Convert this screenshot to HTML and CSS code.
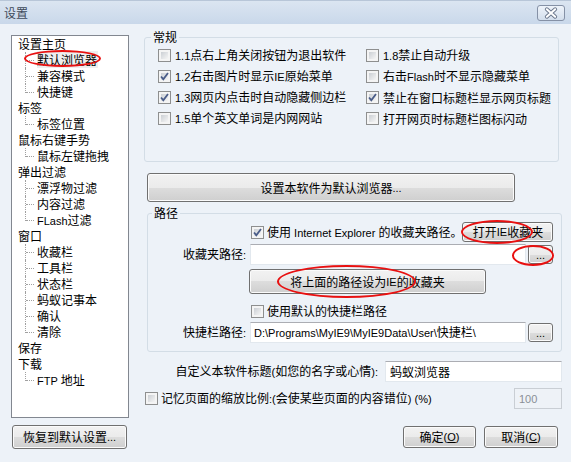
FILE: index.html
```html
<!DOCTYPE html>
<html lang="zh-CN">
<head>
<meta charset="utf-8">
<title>设置</title>
<link rel="stylesheet" href="styles.css">
</head>
<body>
<div class="window">
  <div class="titlebar">
    <span class="title">设置</span>
    <span class="close">
      <svg width="28" height="16" viewBox="0 0 28 16">
        <path d="M9.5 4 L18.5 12 M18.5 4 L9.5 12" stroke="#6b778c" stroke-width="4.2" stroke-linecap="round"/>
        <path d="M9.5 4 L18.5 12 M18.5 4 L9.5 12" stroke="#ffffff" stroke-width="2.2" stroke-linecap="round"/>
      </svg>
    </span>
  </div>
  <div class="main">
    <div class="left">
      <div class="tree">
        <div class="node">设置主页</div>
        <div class="kids">
          <div class="kid"><span class="sel">默认浏览器</span></div>
          <div class="kid">兼容模式</div>
          <div class="kid">快捷键</div>
        </div>
        <div class="node">标签</div>
        <div class="kids"><div class="kid">标签位置</div></div>
        <div class="node">鼠标右键手势</div>
        <div class="kids"><div class="kid">鼠标左键拖拽</div></div>
        <div class="node">弹出过滤</div>
        <div class="kids">
          <div class="kid">漂浮物过滤</div>
          <div class="kid">内容过滤</div>
          <div class="kid"><span class="en">FLash</span>过滤</div>
        </div>
        <div class="node">窗口</div>
        <div class="kids">
          <div class="kid">收藏栏</div>
          <div class="kid">工具栏</div>
          <div class="kid">状态栏</div>
          <div class="kid">蚂蚁记事本</div>
          <div class="kid">确认</div>
          <div class="kid">清除</div>
        </div>
        <div class="node">保存</div>
        <div class="node">下载</div>
        <div class="kids"><div class="kid"><span class="en">FTP </span>地址</div></div>
      </div>
      <button class="btn restore">恢复到默认设置<span class="en">...</span></button>
    </div>

    <div class="right">
      <fieldset class="group general">
        <legend>常规</legend>
        <div class="checks">
          <label class="check"><span class="cb"></span><span><span class="en">1.1</span>点右上角关闭按钮为退出软件</span></label>
          <label class="check"><span class="cb"></span><span><span class="en">1.8</span>禁止自动升级</span></label>
          <label class="check"><span class="cb on"><svg viewBox="0 0 13 13" width="13" height="13"><path d="M3 6.5 L5.3 9.2 L10 3" fill="none" stroke="#4a5c88" stroke-width="1.8"/></svg></span><span><span class="en">1.2</span>右击图片时显示<span class="en">IE</span>原始菜单</span></label>
          <label class="check"><span class="cb"></span><span>右击<span class="en">Flash</span>时不显示隐藏菜单</span></label>
          <label class="check"><span class="cb on"><svg viewBox="0 0 13 13" width="13" height="13"><path d="M3 6.5 L5.3 9.2 L10 3" fill="none" stroke="#4a5c88" stroke-width="1.8"/></svg></span><span><span class="en">1.3</span>网页内点击时自动隐藏侧边栏</span></label>
          <label class="check"><span class="cb on"><svg viewBox="0 0 13 13" width="13" height="13"><path d="M3 6.5 L5.3 9.2 L10 3" fill="none" stroke="#4a5c88" stroke-width="1.8"/></svg></span><span>禁止在窗口标题栏显示网页标题</span></label>
          <label class="check"><span class="cb"></span><span><span class="en">1.5</span>单个英文单词是内网网站</span></label>
          <label class="check"><span class="cb"></span><span>打开网页时标题栏图标闪动</span></label>
        </div>
      </fieldset>

      <button class="btn default-browser">设置本软件为默认浏览器<span class="en">...</span></button>

      <fieldset class="group path">
        <legend>路径</legend>
        <div class="ie-row">
          <label class="check"><span class="cb on"><svg viewBox="0 0 13 13" width="13" height="13"><path d="M3 6.5 L5.3 9.2 L10 3" fill="none" stroke="#4a5c88" stroke-width="1.8"/></svg></span><span>使用<span class="en"> Internet Explorer </span>的收藏夹路径。</span></label>
          <button class="btn open-ie">打开<span class="en">IE</span>收藏夹</button>
        </div>
        <div class="path-row fav-row">
          <span class="plabel">收藏夹路径<span class="en">:</span></span>
          <span class="field"></span>
          <button class="btn dots"><span class="en">...</span></button>
        </div>
        <button class="btn set-ie">将上面的路径设为<span class="en">IE</span>的收藏夹</button>
        <div class="default-row">
          <label class="check"><span class="cb"></span><span>使用默认的快捷栏路径</span></label>
        </div>
        <div class="path-row quick-row">
          <span class="plabel">快捷栏路径<span class="en">:</span></span>
          <span class="field"><span><span class="en">D:\Programs\MyIE9\MyIE9Data\User\</span>快捷栏<span class="en">\</span></span></span>
          <button class="btn dots"><span class="en">...</span></button>
        </div>
      </fieldset>

      <div class="title-row">
        <span>自定义本软件标题<span class="en">(</span>如您的名字或心情<span class="en">):</span></span>
        <span class="field name">蚂蚁浏览器</span>
      </div>

      <div class="zoom-row">
        <label class="check"><span class="cb"></span><span>记忆页面的缩放比例<span class="en">:(</span>会使某些页面的内容错位<span class="en">) (%)</span></span></label>
        <span class="field disabled"><span class="en">100</span></span>
      </div>

      <div class="actions">
        <button class="btn ok">确定<span class="en">(<u>O</u>)</span></button>
        <button class="btn cancel">取消<span class="en">(<u>C</u>)</span></button>
      </div>
    </div>
  </div>

  <span class="mark mark-tree"></span>
  <span class="mark mark-open"></span>
  <span class="mark mark-dots"></span>
  <span class="mark mark-set"></span>
</div>
</body>
</html>
```

FILE: styles.css
```css
* { box-sizing: border-box; }

body {
  margin: 0;
  background: #edf2f8;
  font-family: "Noto Sans CJK SC", "Noto Sans", sans-serif;
  font-size: 12px;
  line-height: 16px;
  color: #000;
}

.en {
  font-family: "Liberation Sans", Arial, sans-serif;
  font-size: 11px;
}

.window {
  position: relative;
  width: 571px;
  height: 462px;
  overflow: hidden;
  background: #edf2f8;
}

/* title bar */
.titlebar {
  height: 24px;
  display: flex;
  align-items: center;
  justify-content: space-between;
  padding: 0 6px 0 4px;
  background: linear-gradient(#dbe5f1, #c9d8ea);
  border-top: 1px solid #b8c6d8;
}
.title {
  color: #3e4a5a;
  font-size: 12px;
}
.close {
  width: 28px;
  height: 16px;
  margin-top: 1px;
  border: 1px solid #8591a6;
  border-radius: 3px;
  background: linear-gradient(#eef3fa, #d3deec);
  display: flex;
  align-items: center;
  justify-content: center;
  overflow: hidden;
}
.close svg { display: block; }

/* layout */
.main {
  display: flex;
  padding-left: 11px;
  gap: 15px;
}
.left {
  width: 118px;
  padding-top: 11px;
  display: flex;
  flex-direction: column;
}
.right {
  width: 418px;
  padding-top: 5px;
  display: flex;
  flex-direction: column;
}

/* tree */
.tree {
  height: 383px;
  background: #fff;
  border: 1px solid #828790;
}
.node {
  height: 16px;
  padding-left: 6px;
  white-space: nowrap;
}
.kid {
  position: relative;
  height: 16px;
  padding-left: 25px;
  white-space: nowrap;
}
.kid::before {
  content: "";
  position: absolute;
  left: 13px;
  top: 0;
  height: 16px;
  border-left: 1px dotted #a0a0a0;
}
.kid:last-child::before { height: 9px; }
.kid::after {
  content: "";
  position: absolute;
  left: 14px;
  top: 8px;
  width: 8px;
  border-top: 1px dotted #a0a0a0;
}
.sel {
  background: #eeeeee;
  padding-right: 1px;
}

/* buttons */
.btn {
  font: inherit;
  color: #000;
  border: 1px solid #707070;
  border-radius: 3px;
  background: linear-gradient(#f2f2f2 0%, #ebebeb 50%, #dddddd 50%, #cfcfcf 100%);
  box-shadow: inset 0 0 0 1px #fbfbfb;
  padding: 0;
  display: flex;
  align-items: center;
  justify-content: center;
  white-space: nowrap;
}
.btn u { text-decoration: underline; }
.restore {
  margin-top: 7px;
  margin-left: 1px;
  width: 115px;
  height: 24px;
}

/* group boxes */
.group {
  margin: 0;
  min-width: 0;
  border: 1px solid #d3dde6;
  border-radius: 3px;
}
.group legend {
  padding: 0 2px;
  line-height: 16px;
  font-size: 12px;
}
.general {
  width: 415px;
  padding: 0 0 32px 6px;
}
.checks {
  margin-left: 7px;
  display: grid;
  grid-template-columns: 208px auto;
  grid-auto-rows: 21px;
}
.check {
  display: flex;
  align-items: center;
  gap: 4px;
  white-space: nowrap;
}
.cb {
  flex: none;
  width: 13px;
  height: 13px;
  border: 1px solid #8e8f8f;
  padding: 2px;
  background: linear-gradient(135deg, #cbcfd4, #f5f5f5) content-box, #f4f4f4;
  position: relative;
}
.cb svg {
  position: absolute;
  left: -1px;
  top: -1px;
}

.default-browser {
  margin-top: 11px;
  margin-left: 3px;
  width: 368px;
  height: 29px;
}

.path {
  margin-top: 3px;
  margin-left: 3px;
  width: 415px;
  padding: 0 0 8px 4px;
}
.ie-row {
  margin-top: 1px;
  width: 401px;
  height: 20px;
  padding-left: 99px;
  display: flex;
  align-items: center;
  justify-content: space-between;
}
.ie-row .check { gap: 3px; }
.open-ie {
  flex: none;
  width: 91px;
  height: 20px;
}
.path-row {
  display: flex;
  align-items: center;
  gap: 4px;
}
.fav-row { margin-top: 2px; }
.quick-row { margin-top: 3px; }
.plabel {
  width: 94px;
  text-align: right;
}
.field {
  display: flex;
  align-items: center;
  width: 276px;
  height: 21px;
  padding-left: 3px;
  background: #fff;
  border: 1px solid #e2e8ee;
  border-top-color: #abadb3;
  white-space: nowrap;
  overflow: hidden;
}
.dots {
  width: 25px;
  height: 19px;
  margin-left: -2px;
}
.set-ie {
  margin-top: 4px;
  margin-left: 97px;
  width: 237px;
  height: 25px;
}
.default-row {
  margin-top: 9px;
  height: 16px;
  padding-left: 99px;
  display: flex;
  align-items: center;
}
.default-row .check { gap: 3px; }

.title-row {
  margin-top: 9px;
  display: flex;
  justify-content: flex-end;
  align-items: center;
  gap: 7px;
}
.field.name {
  width: 177px;
  padding-left: 4px;
}

.zoom-row {
  margin-top: 6px;
  margin-left: 1px;
  display: flex;
  justify-content: space-between;
  align-items: center;
}
.zoom-row .check { gap: 3px; }
.field.disabled {
  width: 48px;
  background: #eef2f7;
  border: 1px solid #c9ced4;
  color: #8a8f96;
  padding-left: 4px;
}

.actions {
  margin-top: 17px;
  margin-right: 4px;
  display: flex;
  justify-content: flex-end;
  gap: 8px;
}
.ok { width: 73px; height: 22px; }
.cancel { width: 74px; height: 22px; }

/* red annotation ellipses */
.mark {
  position: absolute;
  border: 2px solid #e81010;
  border-radius: 50%;
  pointer-events: none;
}
.mark-tree { left: 24px; top: 50px; width: 77px; height: 17px; }
.mark-open { left: 461px; top: 220px; width: 72px; height: 24px; }
.mark-dots { left: 512px; top: 245px; width: 42px; height: 21px; }
.mark-set { left: 277px; top: 265px; width: 139px; height: 33px; }
```
